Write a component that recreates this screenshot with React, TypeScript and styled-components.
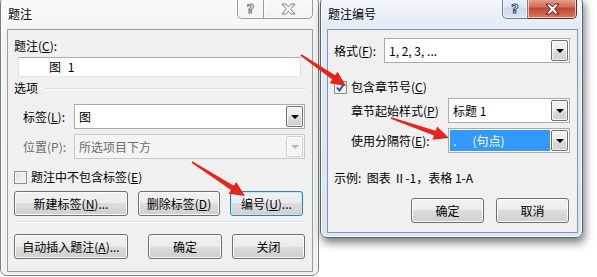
import React from "react";
import styled, { createGlobalStyle } from "styled-components";

const GlobalStyle = createGlobalStyle`
  html, body {
    margin: 0;
    padding: 0;
    background: #ffffff;
  }
  body {
    font-family: "Noto Sans CJK SC", "Liberation Sans", sans-serif;
    font-size: 12px;
    color: #000;
  }
`;

const Desktop = styled.div`
  position: relative;
  width: 597px;
  height: 277px;
  overflow: hidden;
  background: #ffffff;
`;

const Window = styled.div<{ $left: number; $width: number; $height: number; $active?: boolean }>`
  position: absolute;
  top: -4px;
  left: ${({ $left }) => $left}px;
  width: ${({ $width }) => $width}px;
  height: ${({ $height }) => $height}px;
  box-sizing: border-box;
  display: flex;
  flex-direction: column;
  padding: 0 ${({ $active }) => ($active ? 4 : 5)}px ${({ $active }) => ($active ? 4 : 3)}px 6px;
  border: 1px solid ${({ $active }) => ($active ? "#52647c" : "#7d7d7d")};
  border-radius: 7px;
  background: ${({ $active }) =>
    $active
      ? "linear-gradient(#f4f8fd 0, #e2ebf6 30px, #d9e5f3 100%)"
      : "linear-gradient(#fafafa 0, #f3f4f5 40px, #eef0f2 100%)"};
  box-shadow: ${({ $active }) =>
    $active ? "2px 5px 9px rgba(0, 0, 0, 0.5), inset 0 0 0 1px #fbfdff" : "inset 0 0 0 1px #ffffff"};
`;

const TitleBar = styled.div`
  height: 32px;
  flex: none;
  display: flex;
  align-items: center;
  padding-left: 1px;
  font-size: 12px;
  color: #000;
`;

const Client = styled.div<{ $active?: boolean }>`
  flex: 1;
  display: flex;
  flex-direction: column;
  padding: 8px 6px 0 6px;
  border: 1px solid ${({ $active }) => ($active ? "#8396b0" : "#9c9c9c")};
  background: #f0f0f0;
`;

const CaptionGroup = styled.div<{ $left: number }>`
  position: absolute;
  top: 0;
  left: ${({ $left }) => $left}px;
  height: 22px;
  display: flex;
`;

const CaptionButton = styled.div<{ $w: number; $kind: "help" | "close"; $active?: boolean }>`
  width: ${({ $w }) => $w}px;
  height: 22px;
  box-sizing: border-box;
  display: flex;
  align-items: center;
  justify-content: center;
  padding-top: 3px;
  border: 1px solid ${({ $active, $kind }) => ($active ? ($kind === "close" ? "#6e2a22" : "#6c7d96") : "#9a9a9a")};
  border-top: none;
  border-radius: ${({ $kind }) => ($kind === "help" ? "0 0 0 5px" : "0 0 5px 0")};
  ${({ $kind }) => ($kind === "close" ? "border-left: none;" : "")}
  background: ${({ $active, $kind }) =>
    !$active
      ? "linear-gradient(#fbfbfb, #f1f2f3)"
      : $kind === "close"
      ? "linear-gradient(#e9b3a6 0, #d4705c 45%, #c5442f 55%, #d67a5e 100%)"
      : "linear-gradient(#eef4fb 0, #dce7f4 45%, #c9d9ed 55%, #d8e4f2 100%)"};
  box-shadow: inset 0 0 0 1px rgba(255, 255, 255, 0.6);
`;

const HelpGlyph = styled.span<{ $active?: boolean }>`
  font-family: "DejaVu Sans", sans-serif;
  font-weight: bold;
  font-size: 13px;
  line-height: 14px;
  color: #ffffff;
  -webkit-text-stroke: 1px ${({ $active }) => ($active ? "#3b4c63" : "#7a7a7a")};
`;

const Row = styled.div<{ $mt: number; $pl?: number }>`
  display: flex;
  align-items: center;
  margin-top: ${({ $mt }) => $mt}px;
  padding-left: ${({ $pl }) => $pl ?? 0}px;
  line-height: 16px;
  white-space: nowrap;
`;

const FieldLabel = styled.span<{ $w?: number; $disabled?: boolean }>`
  display: inline-block;
  width: ${({ $w }) => ($w ? `${$w}px` : "auto")};
  flex: none;
  line-height: 16px;
  color: ${({ $disabled }) => ($disabled ? "#6d6d6d" : "#000")};
`;

const TextInput = styled.div`
  margin: 3px 0 0 4px;
  width: 283px;
  height: 20px;
  box-sizing: border-box;
  border: 1px solid #abadb3;
  border-color: #abadb3 #dbdfe6 #e3e9ef #e2e3ea;
  background: #fff;
  display: flex;
  align-items: center;
  padding-left: 30px;
  line-height: 16px;
  word-spacing: 4px;
`;

const Section = styled.div`
  display: flex;
  align-items: center;
  margin-top: 3px;
  line-height: 16px;
`;

const SectionLine = styled.div`
  flex: 1;
  height: 1px;
  margin-left: 7px;
  background: #d5dfe5;
  box-shadow: 0 1px 0 #ffffff;
`;

const Combo = styled.div<{ $w: number; $disabled?: boolean }>`
  width: ${({ $w }) => $w}px;
  height: 25px;
  box-sizing: border-box;
  flex: none;
  display: flex;
  padding: 1px;
  border: 1px solid ${({ $disabled }) => ($disabled ? "#c9c9c9" : "#a9abb1")};
  background: ${({ $disabled }) => ($disabled ? "#f4f4f4" : "#ffffff")};
  color: ${({ $disabled }) => ($disabled ? "#6d6d6d" : "#000")};
`;

const ComboValue = styled.div<{ $selected?: boolean }>`
  flex: 1;
  display: flex;
  align-items: center;
  padding-left: 3px;
  margin-right: 1px;
  background: ${({ $selected }) => ($selected ? "#3399ff" : "transparent")};
  color: ${({ $selected }) => ($selected ? "#ffffff" : "inherit")};
  white-space: pre;
`;

const DropButton = styled.div<{ $disabled?: boolean }>`
  width: 17px;
  box-sizing: border-box;
  display: flex;
  align-items: center;
  justify-content: center;
  border: 1px solid ${({ $disabled }) => ($disabled ? "#cfcfcf" : "#707070")};
  border-radius: 2px;
  background: ${({ $disabled }) =>
    $disabled ? "#f4f4f4" : "linear-gradient(#f2f2f2 0, #ebebeb 50%, #dddddd 50%, #cfcfcf 100%)"};
  box-shadow: inset 0 0 0 1px rgba(255, 255, 255, 0.7);
`;

const DropArrow = styled.div<{ $disabled?: boolean }>`
  width: 0;
  height: 0;
  border-left: 4px solid transparent;
  border-right: 4px solid transparent;
  border-top: 4px solid ${({ $disabled }) => ($disabled ? "#b8b8b8" : "#000")};
`;

const CheckBox = styled.div`
  width: 13px;
  height: 13px;
  box-sizing: border-box;
  flex: none;
  border: 1px solid #8e8f8f;
  background: linear-gradient(135deg, #e0e0e0, #f8f8f8);
  box-shadow: inset 0 0 0 1px #f4f4f4;
  position: relative;
`;

const CheckMark = styled.svg`
  position: absolute;
  left: 1px;
  top: 1px;
`;

const CheckLabel = styled.span`
  margin-left: 4px;
  line-height: 16px;
`;

const ButtonRow = styled.div<{ $mt: number; $gap: number; $end?: boolean }>`
  display: flex;
  margin-top: ${({ $mt }) => $mt}px;
  gap: ${({ $gap }) => $gap}px;
  justify-content: ${({ $end }) => ($end ? "flex-end" : "flex-start")};
  padding-right: 2px;
`;

const Spacer = styled.div`
  flex: 1;
`;

const Button = styled.div<{ $w: number; $focus?: boolean }>`
  width: ${({ $w }) => $w}px;
  height: 25px;
  box-sizing: border-box;
  flex: none;
  display: flex;
  align-items: center;
  justify-content: center;
  border: 1px solid ${({ $focus }) => ($focus ? "#3c7fb1" : "#707070")};
  border-radius: 3px;
  background: linear-gradient(#f2f2f2 0, #ebebeb 50%, #dddddd 50%, #cfcfcf 100%);
  box-shadow: inset 0 0 0 1px ${({ $focus }) => ($focus ? "#bfe6fb" : "#fbfbfb")};
  white-space: nowrap;
  line-height: 16px;
`;

const Separator = styled.div`
  margin: 5px 0 0 0;
  height: 1px;
  background: #d5dfe5;
  box-shadow: 0 1px 0 #ffffff;
`;

const Example = styled.div`
  margin-top: 17px;
  line-height: 16px;
  white-space: pre;
`;

const ArrowLayer = styled.svg`
  position: absolute;
  left: 0;
  top: 0;
  pointer-events: none;
`;

const CloseGlyph: React.FC<{ active?: boolean }> = ({ active }) => (
  <svg width="15" height="12" viewBox="0 0 15 12">
    <path
      d="M1 1 H4.8 L7.5 3.9 L10.2 1 H14 L9.6 6 L14 11 H10.2 L7.5 8.1 L4.8 11 H1 L5.4 6 Z"
      fill="#ffffff"
      stroke={active ? "#4a1c16" : "#7a7a7a"}
      strokeWidth="1"
      strokeLinejoin="round"
    />
  </svg>
);

const Check: React.FC<{ checked?: boolean }> = ({ checked }) => (
  <CheckBox>
    {checked && (
      <CheckMark width="9" height="9" viewBox="0 0 9 9">
        <path d="M1 4.5 L3.5 7.5 L8 1" fill="none" stroke="#2a4f8f" strokeWidth="1.8" />
      </CheckMark>
    )}
  </CheckBox>
);

const Dropdown: React.FC<{ w: number; value: string; disabled?: boolean; selected?: boolean }> = ({
  w,
  value,
  disabled,
  selected,
}) => (
  <Combo $w={w} $disabled={disabled}>
    <ComboValue $selected={selected}>{value}</ComboValue>
    <DropButton $disabled={disabled}>
      <DropArrow $disabled={disabled} />
    </DropButton>
  </Combo>
);

function arrowPoints(x1: number, y1: number, x2: number, y2: number) {
  const dx = x2 - x1;
  const dy = y2 - y1;
  const len = Math.hypot(dx, dy);
  const ux = dx / len;
  const uy = dy / len;
  const nx = -uy;
  const ny = ux;
  const head = 15;
  const hw = 7;
  const sw0 = 0.8;
  const sw1 = 2.6;
  const bx = x2 - ux * head;
  const by = y2 - uy * head;
  const pts = [
    [x1 + nx * sw0, y1 + ny * sw0],
    [bx + nx * sw1, by + ny * sw1],
    [bx + nx * hw, by + ny * hw],
    [x2, y2],
    [bx - nx * hw, by - ny * hw],
    [bx - nx * sw1, by - ny * sw1],
    [x1 - nx * sw0, y1 - ny * sw0],
  ];
  return pts.map((p) => `${p[0].toFixed(1)},${p[1].toFixed(1)}`).join(" ");
}

const arrows = [
  [301, 55, 346, 86],
  [391, 118, 449, 138],
  [192, 162, 245, 196],
];

export default function App() {
  return (
    <>
      <GlobalStyle />
      <Desktop>
        <Window $left={0} $width={319} $height={280}>
          <TitleBar>题注</TitleBar>
          <CaptionGroup $left={236}>
            <CaptionButton $w={27} $kind="help">
              <HelpGlyph>?</HelpGlyph>
            </CaptionButton>
            <CaptionButton $w={49} $kind="close">
              <CloseGlyph />
            </CaptionButton>
          </CaptionGroup>
          <Client>
            <FieldLabel>
              题注(<u>C</u>):
            </FieldLabel>
            <TextInput>图 1</TextInput>
            <Section>
              选项
              <SectionLine />
            </Section>
            <Row $mt={8} $pl={9}>
              <FieldLabel $w={51}>
                标签(<u>L</u>):
              </FieldLabel>
              <Dropdown w={231} value="图" />
            </Row>
            <Row $mt={5} $pl={9}>
              <FieldLabel $w={51} $disabled>
                位置(P):
              </FieldLabel>
              <Dropdown w={231} value="所选项目下方" disabled />
            </Row>
            <Row $mt={10}>
              <Check />
              <CheckLabel>
                题注中不包含标签(<u>E</u>)
              </CheckLabel>
            </Row>
            <ButtonRow $mt={6} $gap={10}>
              <Button $w={114}>
                新建标签(<u>N</u>)...
              </Button>
              <Button $w={82}>
                删除标签(<u>D</u>)
              </Button>
              <Button $w={73} $focus>
                编号(<u>U</u>)...
              </Button>
            </ButtonRow>
            <Separator />
            <ButtonRow $mt={12} $gap={10}>
              <Button $w={114}>
                自动插入题注(<u>A</u>)...
              </Button>
              <Spacer />
              <Button $w={74}>确定</Button>
              <Button $w={73}>关闭</Button>
            </ButtonRow>
          </Client>
        </Window>

        <Window $left={320} $width={263} $height={242} $active>
          <TitleBar>题注编号</TitleBar>
          <CaptionGroup $left={181}>
            <CaptionButton $w={26} $kind="help" $active>
              <HelpGlyph $active>?</HelpGlyph>
            </CaptionButton>
            <CaptionButton $w={49} $kind="close" $active>
              <CloseGlyph active />
            </CaptionButton>
          </CaptionGroup>
          <Client $active>
            <Row $mt={0}>
              <FieldLabel $w={50}>
                格式(<u>F</u>):
              </FieldLabel>
              <Dropdown w={186} value="1, 2, 3, ..." />
            </Row>
            <Row $mt={16}>
              <Check checked />
              <CheckLabel>
                包含章节号(<u>C</u>)
              </CheckLabel>
            </Row>
            <Row $mt={3} $pl={17}>
              <FieldLabel $w={97}>
                章节起始样式(<u>P</u>)
              </FieldLabel>
              <Dropdown w={122} value="标题 1" />
            </Row>
            <Row $mt={5} $pl={17}>
              <FieldLabel $w={97}>
                使用分隔符(<u>E</u>):
              </FieldLabel>
              <Dropdown w={122} value={".      (句点)"} selected />
            </Row>
            <Example>示例:  图表 Ⅱ-1，表格 1-A</Example>
            <ButtonRow $mt={12} $gap={12} $end>
              <Button $w={73}>确定</Button>
              <Button $w={73}>取消</Button>
            </ButtonRow>
          </Client>
        </Window>

        <ArrowLayer width="597" height="277">
          {arrows.map(([x1, y1, x2, y2], i) => (
            <polygon key={i} points={arrowPoints(x1, y1, x2, y2)} fill="#e8231b" />
          ))}
        </ArrowLayer>
      </Desktop>
    </>
  );
}
